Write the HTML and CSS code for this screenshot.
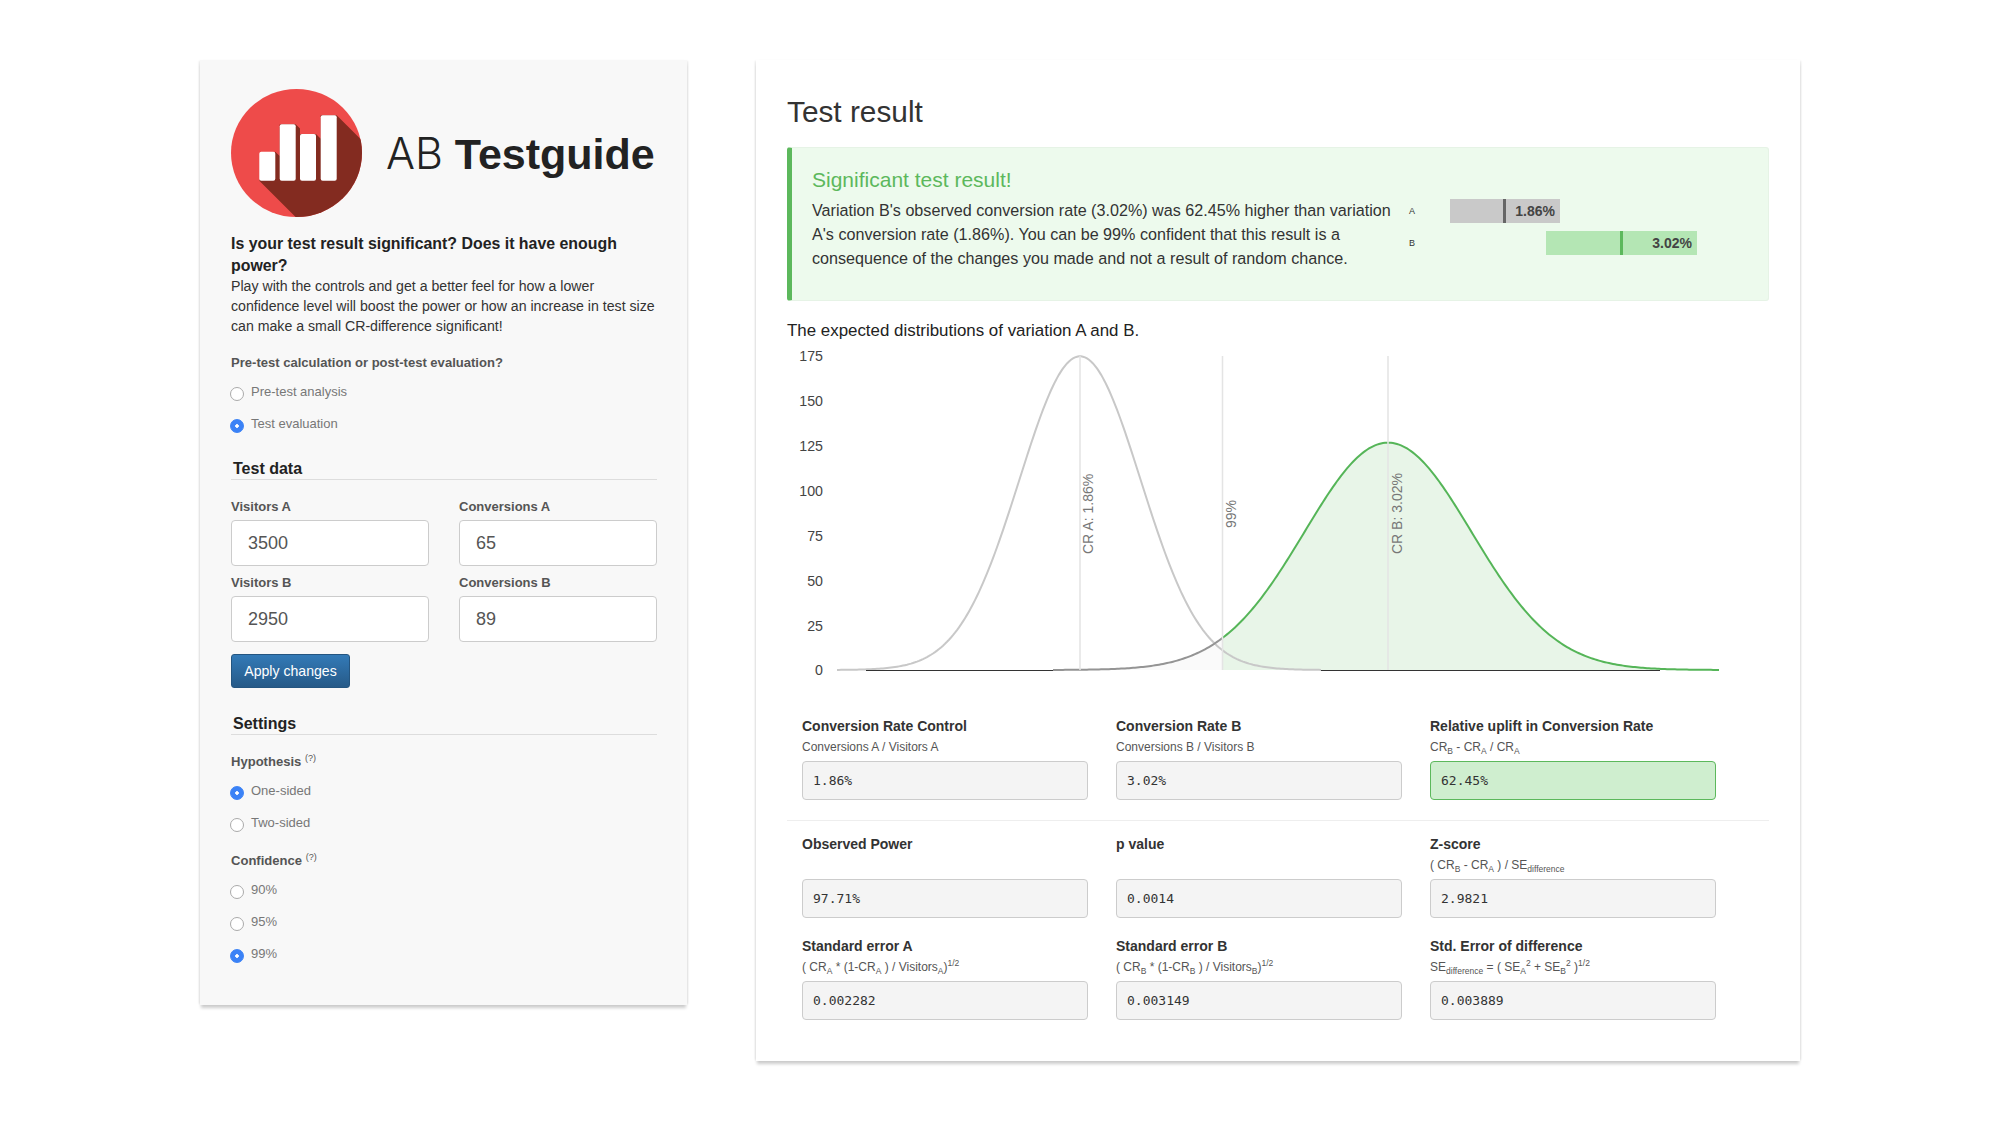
FILE: index.html
```html
<!DOCTYPE html>
<html lang="en">
<head>
    <meta charset="UTF-8">
    <title>AB Testguide</title>
    <link rel="stylesheet" href="styles.css">
</head>
<body>

    <div class="page">

        <div class="controls">
            <div class="brand">
                <svg class="brand-logo" width="131" height="128" viewBox="0 0 131 128">
                    <defs>
                        <clipPath id="logoClip"><ellipse cx="65.5" cy="64" rx="65.5" ry="64"/></clipPath>
                    </defs>
                    <ellipse cx="65.5" cy="64" rx="65.5" ry="64" fill="#ee4b4a"/>
                    <polygon clip-path="url(#logoClip)" fill="#832b20" points="28.3,91.7 44.3,62.7 48.7,67.1 48.7,35.3 64.7,35.3 69,39.6 69,45 85,45 89.7,49.7 89.7,26.3 105.7,26.3 165,85.6 165,135 71.6,135"/>
                    <rect x="28.3" y="62.7" width="16" height="29" rx="2" fill="#fff"/>
                    <rect x="48.7" y="35.3" width="16" height="56.4" rx="2" fill="#fff"/>
                    <rect x="69" y="45" width="16" height="46.7" rx="2" fill="#fff"/>
                    <rect x="89.7" y="26.3" width="16" height="65.4" rx="2" fill="#fff"/>
                </svg>
                <div class="brand-name"><span class="brand-light">AB</span> <strong>Testguide</strong></div>
            </div>

            <h2 class="intro-title">Is your test result significant? Does it have enough power?</h2>
            <p class="intro">Play with the controls and get a better feel for how a lower confidence level will boost the power or how an increase in test size can make a small CR-difference significant!</p>

            <div class="group-label first">Pre-test calculation or post-test evaluation?</div>
            <div class="radios">
                <label class="radio"><input type="radio" name="mode"> Pre-test analysis</label>
                <label class="radio"><input type="radio" name="mode" checked> Test evaluation</label>
            </div>

            <h3 class="section">Test data</h3>
            <div class="fields">
                <div class="field">
                    <label for="visitorsA">Visitors A</label>
                    <input type="text" id="visitorsA" value="3500">
                </div>
                <div class="field">
                    <label for="conversionsA">Conversions A</label>
                    <input type="text" id="conversionsA" value="65">
                </div>
                <div class="field">
                    <label for="visitorsB">Visitors B</label>
                    <input type="text" id="visitorsB" value="2950">
                </div>
                <div class="field">
                    <label for="conversionsB">Conversions B</label>
                    <input type="text" id="conversionsB" value="89">
                </div>
            </div>
            <button class="apply">Apply changes</button>

            <h3 class="section settings">Settings</h3>
            <div class="group-label first">Hypothesis <sup>(?)</sup></div>
            <div class="radios">
                <label class="radio"><input type="radio" name="hypothesis" checked> One-sided</label>
                <label class="radio"><input type="radio" name="hypothesis"> Two-sided</label>
            </div>
            <div class="group-label">Confidence <sup>(?)</sup></div>
            <div class="radios">
                <label class="radio"><input type="radio" name="confidence"> 90%</label>
                <label class="radio"><input type="radio" name="confidence"> 95%</label>
                <label class="radio"><input type="radio" name="confidence" checked> 99%</label>
            </div>
        </div>

        <div class="result">
            <h1 class="result-title">Test result</h1>

            <div class="alert">
                <div class="alert-title">Significant test result!</div>
                <div class="alert-body">
                    <p class="alert-text">Variation B's observed conversion rate (3.02%) was 62.45% higher than variation A's conversion rate (1.86%). You can be 99% confident that this result is a consequence of the changes you made and not a result of random chance.</p>
                    <div class="bars">
                        <div class="bar-row">
                            <span class="bar-name">A</span>
                            <div class="bar bar-a" style="margin-left: 0; width: 110px;">1.86%</div>
                        </div>
                        <div class="bar-row">
                            <span class="bar-name">B</span>
                            <div class="bar bar-b" style="margin-left: 96px; width: 151px;">3.02%</div>
                        </div>
                    </div>
                </div>
            </div>

            <div class="chart-title">The expected distributions of variation A and B.</div>

            <!-- viewBox is in page pixels, chart.js draws the curves into it -->
            <svg class="chart" width="982" height="375" viewBox="787 342 982 375">
                <path id="fillLow" fill="#fafafa"/>
                <path id="fillHigh" fill="#e8f5e8"/>
                <path id="curveA" fill="none" stroke="#c8c8c8" stroke-width="2"/>
                <path d="M866 670.5H1053M1321 670.5H1660" stroke="#333" stroke-width="1"/>
                <path id="curveLow" fill="none" stroke="#949494" stroke-width="2"/>
                <path id="curveHigh" fill="none" stroke="#55b558" stroke-width="2"/>

                <path class="marker" d="M1080 356V670M1222.5 356V670M1388 356V670"/>

                <text class="tick" x="823" y="361">175</text>
                <text class="tick" x="823" y="406">150</text>
                <text class="tick" x="823" y="451">125</text>
                <text class="tick" x="823" y="496">100</text>
                <text class="tick" x="823" y="541">75</text>
                <text class="tick" x="823" y="586">50</text>
                <text class="tick" x="823" y="631">25</text>
                <text class="tick" x="823" y="675">0</text>

                <text class="marker-label" transform="translate(1093 554) rotate(-90)">CR A: 1.86%</text>
                <text class="marker-label" transform="translate(1236 528) rotate(-90)">99%</text>
                <text class="marker-label" transform="translate(1402 554) rotate(-90)">CR B: 3.02%</text>
            </svg>

            <div class="metrics">
                <div class="metric">
                    <div class="metric-name">Conversion Rate Control</div>
                    <div class="metric-sub">Conversions A / Visitors A</div>
                    <div class="metric-value">1.86%</div>
                </div>
                <div class="metric">
                    <div class="metric-name">Conversion Rate B</div>
                    <div class="metric-sub">Conversions B / Visitors B</div>
                    <div class="metric-value">3.02%</div>
                </div>
                <div class="metric">
                    <div class="metric-name">Relative uplift in Conversion Rate</div>
                    <div class="metric-sub">CR<sub>B</sub> - CR<sub>A</sub> / CR<sub>A</sub></div>
                    <div class="metric-value good">62.45%</div>
                </div>
            </div>

            <hr class="divider">

            <div class="metrics">
                <div class="metric">
                    <div class="metric-name">Observed Power</div>
                    <div class="metric-sub"></div>
                    <div class="metric-value">97.71%</div>
                </div>
                <div class="metric">
                    <div class="metric-name">p value</div>
                    <div class="metric-sub"></div>
                    <div class="metric-value">0.0014</div>
                </div>
                <div class="metric">
                    <div class="metric-name">Z-score</div>
                    <div class="metric-sub">( CR<sub>B</sub> - CR<sub>A</sub> ) / SE<sub>difference</sub></div>
                    <div class="metric-value">2.9821</div>
                </div>
                <div class="metric">
                    <div class="metric-name">Standard error A</div>
                    <div class="metric-sub">( CR<sub>A</sub> * (1-CR<sub>A</sub> ) / Visitors<sub>A</sub>)<sup>1/2</sup></div>
                    <div class="metric-value">0.002282</div>
                </div>
                <div class="metric">
                    <div class="metric-name">Standard error B</div>
                    <div class="metric-sub">( CR<sub>B</sub> * (1-CR<sub>B</sub> ) / Visitors<sub>B</sub>)<sup>1/2</sup></div>
                    <div class="metric-value">0.003149</div>
                </div>
                <div class="metric">
                    <div class="metric-name">Std. Error of difference</div>
                    <div class="metric-sub">SE<sub>difference</sub> = ( SE<sub>A</sub><sup>2</sup> + SE<sub>B</sub><sup>2</sup> )<sup>1/2</sup></div>
                    <div class="metric-value">0.003889</div>
                </div>
            </div>
        </div>

    </div>

    <script src="chart.js"></script>
</body>
</html>
```

FILE: styles.css
```css
body {
    font-family: "Liberation Sans", Arial, sans-serif;
    margin: 0;
    padding: 0;
    background-color: #fff;
    color: #333;
}

.page {
    display: flex;
    align-items: flex-start;
    gap: 69px;
    padding: 60px 0 64px 200px;
}

/* left column */

.controls {
    box-sizing: border-box;
    width: 487px;
    height: 945px;
    padding: 29px 30px 0 31px;
    background-color: #f8f8f8;
    box-shadow: 0 4px 3px -1px rgba(0, 0, 0, 0.2), 2px 0 2px -1px rgba(0, 0, 0, 0.1), -2px 0 2px -1px rgba(0, 0, 0, 0.1);
}

.brand {
    display: flex;
    align-items: flex-start;
    height: 131px;
}

.brand-logo {
    display: block;
    flex: none;
}

.brand-name {
    margin-left: 24px;
    font-size: 43px;
    line-height: 129px;
    color: #222;
    white-space: nowrap;
}

.brand-light {
    font-family: Inter, "Liberation Sans", sans-serif;
    font-weight: 300;
}

.intro-title {
    margin: 13px 0 0;
    font-size: 15.9px;
    line-height: 22px;
    color: #222;
}

.intro {
    margin: -1px 0 0;
    font-size: 14.15px;
    line-height: 20px;
}

.group-label {
    margin-top: 12px;
    font-size: 13.05px;
    font-weight: bold;
    line-height: 20px;
    color: #555;
}

.group-label.first {
    margin-top: 17px;
}

.group-label sup {
    font-size: 9px;
    font-weight: normal;
    line-height: 0;
}

.radios {
    margin-top: 3px;
}

.radio {
    box-sizing: border-box;
    display: flex;
    align-items: center;
    gap: 7px;
    height: 32px;
    padding-bottom: 2px;
    font-size: 13px;
    color: #777;
}

.radio input {
    appearance: none;
    box-sizing: border-box;
    flex: none;
    width: 14px;
    height: 14px;
    margin: 6px 0 0 -1px;
    border: 1px solid #aaa;
    border-radius: 50%;
    background-color: #fff;
}

.radio input:checked {
    border-color: #3b82f6;
    background: radial-gradient(circle, #fff 0 1.5px, #3b82f6 2px);
}

.section {
    margin: 19px 0 0;
    padding: 0 0 0 2px;
    font-size: 16px;
    line-height: 20px;
    color: #222;
    border-bottom: 1px solid #ddd;
}

.section.settings {
    margin-top: 26px;
}

.fields {
    display: grid;
    grid-template-columns: 198px 198px;
    column-gap: 30px;
    row-gap: 7px;
    margin-top: 17px;
}

.field label {
    display: block;
    font-size: 13px;
    font-weight: bold;
    line-height: 20px;
    color: #555;
}

.field input {
    box-sizing: border-box;
    display: block;
    width: 100%;
    height: 46px;
    margin-top: 3px;
    padding: 0 16px;
    font-family: "Liberation Sans", Arial, sans-serif;
    font-size: 18px;
    color: #555;
    background-color: #fff;
    border: 1px solid #ccc;
    border-radius: 4px;
}

.apply {
    display: block;
    width: 119px;
    height: 34px;
    margin-top: 12px;
    padding: 0;
    font-family: "Liberation Sans", Arial, sans-serif;
    font-size: 14.1px;
    color: #fff;
    background: linear-gradient(#337ab7, #265a88);
    border: 1px solid #245580;
    border-radius: 3px;
}

/* right column */

.result {
    box-sizing: border-box;
    width: 1044px;
    height: 1001px;
    padding: 34px 31px 0;
    background-color: #fff;
    box-shadow: 0 4px 3px -1px rgba(0, 0, 0, 0.2), 2px 0 2px -1px rgba(0, 0, 0, 0.1), -2px 0 2px -1px rgba(0, 0, 0, 0.1);
}

.result-title {
    margin: 0;
    font-size: 29.8px;
    font-weight: normal;
    line-height: 36px;
}

.alert {
    box-sizing: border-box;
    height: 154px;
    margin-top: 17px;
    padding: 19px 20px 0;
    background-color: #edfaed;
    border: 1px solid #e6f3e6;
    border-left: 5px solid #5cb85c;
    border-radius: 3px;
}

.alert-title {
    font-size: 21px;
    line-height: 26px;
    color: #5cb85c;
}

.alert-body {
    display: flex;
    margin-top: 5px;
}

.alert-text {
    flex: none;
    width: 593px;
    margin: 0;
    font-size: 16.15px;
    line-height: 24px;
}

.bars {
    display: flex;
    flex-direction: column;
    gap: 8px;
    margin-top: 1px;
}

.bar-row {
    display: flex;
    align-items: center;
    height: 24px;
}

.bar-name {
    box-sizing: border-box;
    flex: none;
    width: 45px;
    padding-left: 4px;
    font-size: 9px;
    color: #333;
}

.bar {
    position: relative;
    box-sizing: border-box;
    height: 24px;
    padding-right: 5px;
    font-size: 14px;
    font-weight: bold;
    line-height: 24px;
    text-align: right;
    color: #444;
}

.bar::after {
    content: "";
    position: absolute;
    left: 50%;
    top: 0;
    width: 3px;
    height: 100%;
    margin-left: -2px;
}

.bar-a {
    background-color: #c9c9c9;
}

.bar-a::after {
    background-color: #666;
}

.bar-b {
    background-color: #b4e6b4;
}

.bar-b::after {
    background-color: #5cb85c;
}

.chart-title {
    margin-top: 19px;
    font-size: 16.9px;
    line-height: 22px;
    color: #222;
}

.chart {
    display: block;
}

.marker {
    fill: none;
    stroke: #e4e4e4;
    stroke-width: 1.5;
}

.tick {
    font-size: 14.2px;
    text-anchor: end;
    fill: #444;
}

.marker-label {
    font-size: 14px;
    fill: #777;
}

.metrics {
    display: grid;
    grid-template-columns: repeat(3, 286px);
    column-gap: 28px;
    row-gap: 19px;
    padding-left: 15px;
}

.metric-name {
    font-size: 14px;
    font-weight: bold;
    line-height: 18px;
}

.metric-sub {
    height: 16px;
    margin-top: 4px;
    font-size: 12px;
    line-height: 16px;
    color: #555;
}

.metric-sub sub,
.metric-sub sup {
    font-size: 8.5px;
    line-height: 0;
}

.metric-value {
    box-sizing: border-box;
    height: 39px;
    margin-top: 6px;
    padding-left: 10px;
    font-family: "DejaVu Sans Mono", "Liberation Mono", monospace;
    font-size: 13px;
    line-height: 38px;
    background-color: #f4f4f4;
    border: 1px solid #ccc;
    border-radius: 4px;
}

.metric-value.good {
    background-color: #cfeecf;
    border-color: #5cb85c;
}

.divider {
    height: 1px;
    margin: 20px 0 14px;
    border: none;
    background-color: #eee;
}
```

FILE: chart.js
```js
// normal curves for both variations, x and y are page pixels (see viewBox)
var baseY = 670;
var pxPerUnit = 314 / 175;
var pxPerPercent = (1388 - 1080) / (3.02 - 1.86);

function curvePoints(mean, se, fromX, toX) {
    var sd = se * pxPerPercent;
    var peak = 1 / ((se / 100) * Math.sqrt(2 * Math.PI));
    var pts = [];
    for (var x = fromX; x <= toX; x += 2) {
        var z = (x - mean) / sd;
        var y = baseY - peak * Math.exp(-z * z / 2) * pxPerUnit;
        pts.push(x + ' ' + y.toFixed(2));
    }
    return pts;
}

function setPath(id, pts, closed) {
    var d = 'M' + pts.join('L');
    if (closed) {
        d += 'V' + baseY + 'H' + pts[0].split(' ')[0] + 'Z';
    }
    document.getElementById(id).setAttribute('d', d);
}

var low = curvePoints(1388, 0.3149, 1053, 1223);
var high = curvePoints(1388, 0.3149, 1223, 1719);

setPath('curveA', curvePoints(1080, 0.2282, 837, 1321), false);
setPath('fillLow', low, true);
setPath('fillHigh', high, true);
setPath('curveLow', low, false);
setPath('curveHigh', high, false);
```
